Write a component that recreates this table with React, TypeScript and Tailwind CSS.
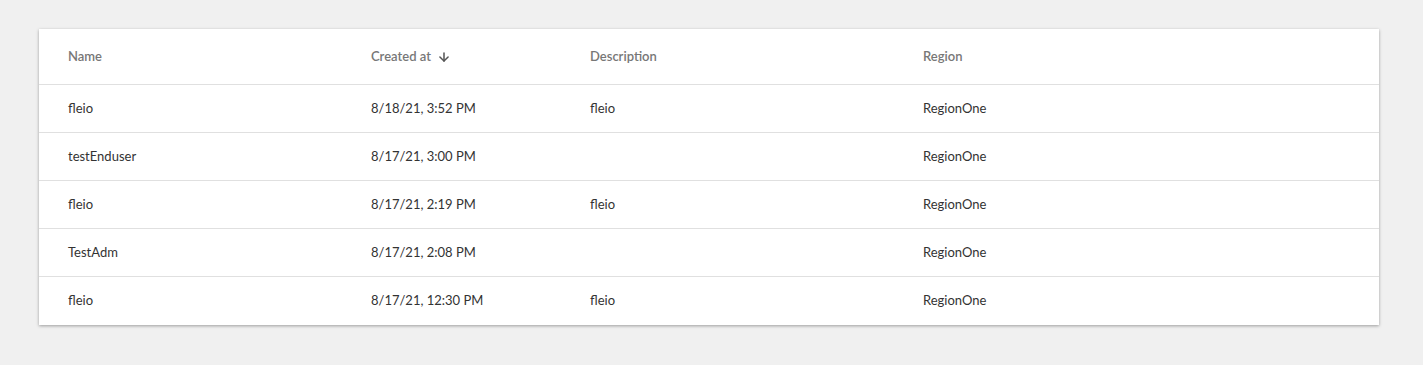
import { ArrowDown } from 'lucide-react';

const rows = [
  { name: 'fleio', created: '8/18/21, 3:52 PM', description: 'fleio', region: 'RegionOne' },
  { name: 'testEnduser', created: '8/17/21, 3:00 PM', description: '', region: 'RegionOne' },
  { name: 'fleio', created: '8/17/21, 2:19 PM', description: 'fleio', region: 'RegionOne' },
  { name: 'TestAdm', created: '8/17/21, 2:08 PM', description: '', region: 'RegionOne' },
  { name: 'fleio', created: '8/17/21, 12:30 PM', description: 'fleio', region: 'RegionOne' },
];

export default function App() {
  return (
    <div className="min-h-[365px] bg-[#f0f0f0] pl-[39px] pr-[44px] pt-[29px] pb-[40px]" style={{ fontFamily: 'Lato, "Open Sans", sans-serif' }}>
      <div className="bg-white shadow-[0_1px_3px_rgba(0,0,0,0.35)]">
        <div className="grid h-[56px] grid-cols-[303px_219px_333px_1fr] items-center border-b border-[#e0e0e0] px-[29px] text-[13px] font-semibold text-[#777]">
          <div>Name</div>
          <div className="flex items-center gap-[6px]">
            Created at
            <ArrowDown className="h-[14px] w-[14px] text-[#555]" strokeWidth={2.6} />
          </div>
          <div>Description</div>
          <div>Region</div>
        </div>
        {rows.map((r, i) => (
          <div
            key={i}
            className={`grid h-[48px] grid-cols-[303px_219px_333px_1fr] items-center px-[29px] text-[13px] text-[#333] ${i < rows.length - 1 ? 'border-b border-[#e0e0e0]' : ''}`}
          >
            <div>{r.name}</div>
            <div>{r.created}</div>
            <div>{r.description}</div>
            <div>{r.region}</div>
          </div>
        ))}
      </div>
    </div>
  );
}
